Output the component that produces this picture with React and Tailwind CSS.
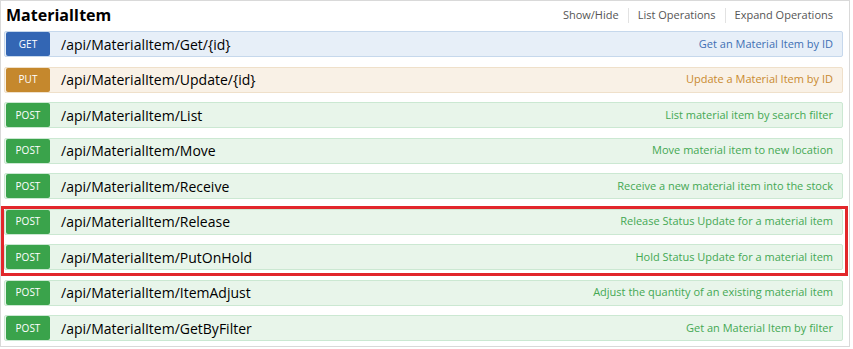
const ops = [
  { method: "GET", path: "/api/MaterialItem/Get/{id}", desc: "Get an Material Item by ID" },
  { method: "PUT", path: "/api/MaterialItem/Update/{id}", desc: "Update a Material Item by ID" },
  { method: "POST", path: "/api/MaterialItem/List", desc: "List material item by search filter" },
  { method: "POST", path: "/api/MaterialItem/Move", desc: "Move material item to new location" },
  { method: "POST", path: "/api/MaterialItem/Receive", desc: "Receive a new material item into the stock" },
  { method: "POST", path: "/api/MaterialItem/Release", desc: "Release Status Update for a material item" },
  { method: "POST", path: "/api/MaterialItem/PutOnHold", desc: "Hold Status Update for a material item" },
  { method: "POST", path: "/api/MaterialItem/ItemAdjust", desc: "Adjust the quantity of an existing material item" },
  { method: "POST", path: "/api/MaterialItem/GetByFilter", desc: "Get an Material Item by filter" },
];

const styles = {
  GET: {
    row: "bg-[#e7eff8] border-[#c6d8ec]",
    badge: "bg-[#3366b4]",
    desc: "text-[#3f6fb4]",
  },
  PUT: {
    row: "bg-[#f9f1e6] border-[#efe0ca]",
    badge: "bg-[#c5882d]",
    desc: "text-[#c98a2e]",
  },
  POST: {
    row: "bg-[#e8f5ea] border-[#cbe8d2]",
    badge: "bg-[#3aa34b]",
    desc: "text-[#44a853]",
  },
};

const OpRow = ({ op }) => {
  const s = styles[op.method];
  return (
    <div className={`flex items-center h-[26px] border rounded-[2px] ${s.row}`}>
      <span
        className={`ml-px w-[44px] h-[24px] flex items-center justify-center rounded-[2px] text-white text-[10px] ${s.badge}`}
      >
        {op.method}
      </span>
      <span className="ml-[11px] text-[14px] text-black">{op.path}</span>
      <span className={`ml-auto mr-[9px] text-[11px] ${s.desc}`}>{op.desc}</span>
    </div>
  );
};

export default function App() {
  return (
    <div className="w-[853px] h-[349px] bg-white" style={{ fontFamily: '"Open Sans", "DejaVu Sans", sans-serif' }}>
      <div className="w-[850px] h-[347px] border-[1.5px] border-[#d9d9d9] bg-white">
        {/* heading */}
        <div className="flex items-center h-[30px] pl-[5px] pr-[16px] pb-[3px]">
          <h2 className="text-[16px] font-bold text-black leading-none">MaterialItem</h2>
          <div className="ml-auto flex items-center text-[11px] text-[#555] pt-[2px]">
            <span>Show/Hide</span>
            <span className="mx-[9px] w-px h-[15px] bg-[#e2e2e2]" />
            <span>List Operations</span>
            <span className="mx-[9px] w-px h-[15px] bg-[#e2e2e2]" />
            <span>Expand Operations</span>
          </div>
        </div>

        {/* operations */}
        <div className="relative flex flex-col gap-[9.5px] pl-[3px] pr-[6px]">
          {ops.map((op) => (
            <OpRow key={op.path} op={op} />
          ))}
          {/* highlight marking the two status endpoints */}
          <div className="absolute left-0 right-[1px] top-[174.5px] h-[70px] border-[3px] border-[#e2262b] pointer-events-none" />
        </div>
      </div>
    </div>
  );
}
